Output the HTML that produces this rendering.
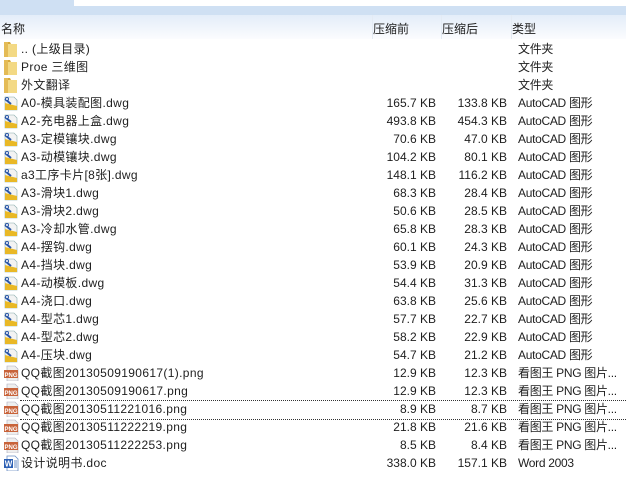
<!DOCTYPE html>
<html><head><meta charset="utf-8"><style>
body{margin:0;width:626px;height:478px;overflow:hidden;background:#fff;font-family:"Liberation Sans","Noto Sans CJK SC",sans-serif;font-size:12px;color:#1e1e1e;position:relative}
.top{position:absolute;left:0;top:0;width:626px;height:15px;background:#cfe0f3}
.wbox{position:absolute;left:74px;top:0;width:552px;height:6px;background:#fff}
.hdr{position:absolute;left:0;top:15px;width:626px;height:24px;background:linear-gradient(#e3edf9,#fbfcfe)}
.hdr span{position:absolute;top:5px}
.div{position:absolute;top:15px;width:1px;height:24px;background:#e4ebf4}
.r{position:absolute;left:0;width:626px;height:18px;line-height:18px;white-space:nowrap}
.r .n{position:absolute;left:21px;letter-spacing:0.35px}
.r .a{position:absolute;right:190px}
.r .b{position:absolute;right:119px}
.r .t{position:absolute;left:518px;letter-spacing:-0.3px}
.ic{position:absolute;left:3px;top:1px;width:16px;height:16px}
.foc{position:absolute;left:20px;top:400px;width:606px;height:18px;border-top:1px dotted #333;border-bottom:1px dotted #333}
</style></head><body>
<div class="top"></div><div class="wbox"></div>
<div class="hdr"><span style="left:1px">名称</span><span style="left:373px">压缩前</span><span style="left:442px">压缩后</span><span style="left:512px">类型</span></div>
<div class="div" style="left:372px"></div><div class="div" style="left:441px"></div><div class="div" style="left:511px"></div>
<svg width="0" height="0" style="position:absolute"><defs>
<g id="fold"><path d="M1 1h6l1 2h6v13H1z" fill="#d7a93c"/><path d="M4 3h10v13H4z" fill="#f3d984"/><path d="M1 1h4v15H1z" fill="#e4bb55"/></g>
<g id="dwg"><path d="M2 2h9l3 3v10H2z" fill="#f3f3f3" stroke="#8aa" stroke-width=".6"/><path d="M2 8l12 3v4H2z" fill="#e9b826"/><path d="M2 4l6 5" stroke="#2a56a8" stroke-width="2"/><circle cx="4" cy="4" r="1.5" fill="#fff" stroke="#2a56a8"/></g>
<g id="png"><path d="M4 1h8l3 3v12H4z" fill="#eee" stroke="#aab" stroke-width=".6"/><rect x="1" y="5" width="14" height="8" fill="#c8633a"/><text x="8" y="12" font-size="6" font-family="Liberation Sans" fill="#fff" text-anchor="middle" font-weight="bold">PNG</text></g>
<g id="doc"><path d="M4 1h8l3 3v12H4z" fill="#fff" stroke="#6b8fc4" stroke-width=".8"/><rect x="1" y="4" width="9" height="9" fill="#2b5fb4"/><text x="5.5" y="11.5" font-size="8" font-family="Liberation Sans" fill="#fff" text-anchor="middle" font-weight="bold">W</text><path d="M11 6h3M11 8h3M11 10h3M11 12h3" stroke="#6b8fc4"/></g>
</defs></svg>
<div class="foc"></div>
<div class="r" style="top:40px"><svg class="ic"><use href="#fold"/></svg><span class="n">.. (上级目录)</span><span class="t">文件夹</span></div>
<div class="r" style="top:58px"><svg class="ic"><use href="#fold"/></svg><span class="n">Proe 三维图</span><span class="t">文件夹</span></div>
<div class="r" style="top:76px"><svg class="ic"><use href="#fold"/></svg><span class="n">外文翻译</span><span class="t">文件夹</span></div>
<div class="r" style="top:94px"><svg class="ic"><use href="#dwg"/></svg><span class="n">A0-模具装配图.dwg</span><span class="a">165.7 KB</span><span class="b">133.8 KB</span><span class="t">AutoCAD 图形</span></div>
<div class="r" style="top:112px"><svg class="ic"><use href="#dwg"/></svg><span class="n">A2-充电器上盒.dwg</span><span class="a">493.8 KB</span><span class="b">454.3 KB</span><span class="t">AutoCAD 图形</span></div>
<div class="r" style="top:130px"><svg class="ic"><use href="#dwg"/></svg><span class="n">A3-定模镶块.dwg</span><span class="a">70.6 KB</span><span class="b">47.0 KB</span><span class="t">AutoCAD 图形</span></div>
<div class="r" style="top:148px"><svg class="ic"><use href="#dwg"/></svg><span class="n">A3-动模镶块.dwg</span><span class="a">104.2 KB</span><span class="b">80.1 KB</span><span class="t">AutoCAD 图形</span></div>
<div class="r" style="top:166px"><svg class="ic"><use href="#dwg"/></svg><span class="n">a3工序卡片[8张].dwg</span><span class="a">148.1 KB</span><span class="b">116.2 KB</span><span class="t">AutoCAD 图形</span></div>
<div class="r" style="top:184px"><svg class="ic"><use href="#dwg"/></svg><span class="n">A3-滑块1.dwg</span><span class="a">68.3 KB</span><span class="b">28.4 KB</span><span class="t">AutoCAD 图形</span></div>
<div class="r" style="top:202px"><svg class="ic"><use href="#dwg"/></svg><span class="n">A3-滑块2.dwg</span><span class="a">50.6 KB</span><span class="b">28.5 KB</span><span class="t">AutoCAD 图形</span></div>
<div class="r" style="top:220px"><svg class="ic"><use href="#dwg"/></svg><span class="n">A3-冷却水管.dwg</span><span class="a">65.8 KB</span><span class="b">28.3 KB</span><span class="t">AutoCAD 图形</span></div>
<div class="r" style="top:238px"><svg class="ic"><use href="#dwg"/></svg><span class="n">A4-摆钩.dwg</span><span class="a">60.1 KB</span><span class="b">24.3 KB</span><span class="t">AutoCAD 图形</span></div>
<div class="r" style="top:256px"><svg class="ic"><use href="#dwg"/></svg><span class="n">A4-挡块.dwg</span><span class="a">53.9 KB</span><span class="b">20.9 KB</span><span class="t">AutoCAD 图形</span></div>
<div class="r" style="top:274px"><svg class="ic"><use href="#dwg"/></svg><span class="n">A4-动模板.dwg</span><span class="a">54.4 KB</span><span class="b">31.3 KB</span><span class="t">AutoCAD 图形</span></div>
<div class="r" style="top:292px"><svg class="ic"><use href="#dwg"/></svg><span class="n">A4-浇口.dwg</span><span class="a">63.8 KB</span><span class="b">25.6 KB</span><span class="t">AutoCAD 图形</span></div>
<div class="r" style="top:310px"><svg class="ic"><use href="#dwg"/></svg><span class="n">A4-型芯1.dwg</span><span class="a">57.7 KB</span><span class="b">22.7 KB</span><span class="t">AutoCAD 图形</span></div>
<div class="r" style="top:328px"><svg class="ic"><use href="#dwg"/></svg><span class="n">A4-型芯2.dwg</span><span class="a">58.2 KB</span><span class="b">22.9 KB</span><span class="t">AutoCAD 图形</span></div>
<div class="r" style="top:346px"><svg class="ic"><use href="#dwg"/></svg><span class="n">A4-压块.dwg</span><span class="a">54.7 KB</span><span class="b">21.2 KB</span><span class="t">AutoCAD 图形</span></div>
<div class="r" style="top:364px"><svg class="ic"><use href="#png"/></svg><span class="n">QQ截图20130509190617(1).png</span><span class="a">12.9 KB</span><span class="b">12.3 KB</span><span class="t">看图王 PNG 图片...</span></div>
<div class="r" style="top:382px"><svg class="ic"><use href="#png"/></svg><span class="n">QQ截图20130509190617.png</span><span class="a">12.9 KB</span><span class="b">12.3 KB</span><span class="t">看图王 PNG 图片...</span></div>
<div class="r" style="top:400px"><svg class="ic"><use href="#png"/></svg><span class="n">QQ截图20130511221016.png</span><span class="a">8.9 KB</span><span class="b">8.7 KB</span><span class="t">看图王 PNG 图片...</span></div>
<div class="r" style="top:418px"><svg class="ic"><use href="#png"/></svg><span class="n">QQ截图20130511222219.png</span><span class="a">21.8 KB</span><span class="b">21.6 KB</span><span class="t">看图王 PNG 图片...</span></div>
<div class="r" style="top:436px"><svg class="ic"><use href="#png"/></svg><span class="n">QQ截图20130511222253.png</span><span class="a">8.5 KB</span><span class="b">8.4 KB</span><span class="t">看图王 PNG 图片...</span></div>
<div class="r" style="top:454px"><svg class="ic"><use href="#doc"/></svg><span class="n">设计说明书.doc</span><span class="a">338.0 KB</span><span class="b">157.1 KB</span><span class="t">Word 2003</span></div>
</body></html>
